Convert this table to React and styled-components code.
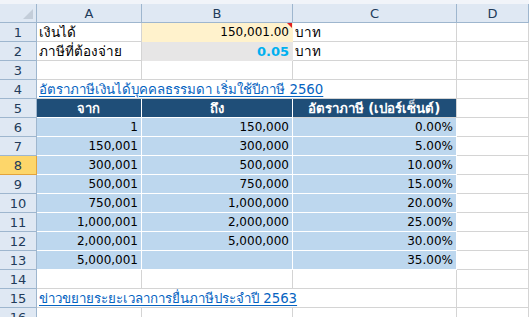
import styled, { createGlobalStyle } from "styled-components";

const GlobalStyle = createGlobalStyle`
  html, body {
    margin: 0;
    padding: 0;
    background: #ffffff;
    overflow: hidden;
  }
  body {
    font-family: "DejaVu Sans", Tahoma, "Noto Sans", sans-serif;
    font-size: 12px;
  }
`;

const Sheet = styled.div`
  display: grid;
  grid-template-columns: 37px 105px 151px 164px 1fr;
  grid-template-rows: 4px 19px;
  grid-auto-rows: 19px;
  width: 529px;
  height: 317px;
  overflow: hidden;
  color: #000;
`;

const TopStrip = styled.div`
  grid-column: 1 / -1;
  background: #f1f4f9;
`;

const Corner = styled.div`
  position: relative;
  box-sizing: border-box;
  background: #dfe8f3;
  border-right: 1px solid #9eb6ce;
  border-bottom: 1px solid #9eb6ce;
  &::after {
    content: "";
    position: absolute;
    right: 3px;
    bottom: 3px;
    width: 0;
    height: 0;
    border-left: 10px solid transparent;
    border-bottom: 10px solid #c3cdd9;
  }
`;

const ColHead = styled.div`
  box-sizing: border-box;
  display: flex;
  align-items: center;
  justify-content: center;
  background: #dfe8f3;
  border-right: 1px solid #9eb6ce;
  border-bottom: 1px solid #9eb6ce;
  color: #223b5a;
  font-size: 13px;
`;

const RowHead = styled.div`
  box-sizing: border-box;
  display: flex;
  align-items: center;
  justify-content: center;
  background: ${(p) => (p.$active ? "#fdd66a" : "#dfe8f3")};
  border-right: 1px solid ${(p) => (p.$active ? "#e3a33b" : "#9eb6ce")};
  border-bottom: 1px solid ${(p) => (p.$active ? "#e3a33b" : "#9eb6ce")};
  color: #223b5a;
  font-size: 13px;
`;

const Cell = styled.div`
  position: relative;
  box-sizing: border-box;
  display: flex;
  align-items: center;
  justify-content: ${(p) =>
    p.$align === "right" ? "flex-end" : p.$align === "center" ? "center" : "flex-start"};
  padding: 0 3px 0 2px;
  white-space: nowrap;
  overflow: visible;
  grid-column: ${(p) => p.$span || "auto"};
  background: ${(p) => p.$bg || "#ffffff"};
  border-right: 1px solid ${(p) => p.$line || "#d4d4d4"};
  border-bottom: 1px solid ${(p) => p.$line || "#d4d4d4"};
  color: ${(p) => p.$color || "#000"};
  font-weight: ${(p) => (p.$bold ? 700 : 400)};
  font-size: ${(p) => (p.$size ? `${p.$size}px` : "12px")};
`;

const Link = styled.span`
  color: #0563c1;
  font-size: 13.3px;
  text-decoration: underline;
  text-underline-offset: 2px;
`;

const CommentMark = styled.span`
  position: absolute;
  top: 0;
  right: 0;
  width: 0;
  height: 0;
  border-top: 5px solid #e02020;
  border-left: 5px solid transparent;
`;

const rates = [
  ["1", "150,000", "0.00%"],
  ["150,001", "300,000", "5.00%"],
  ["300,001", "500,000", "10.00%"],
  ["500,001", "750,000", "15.00%"],
  ["750,001", "1,000,000", "20.00%"],
  ["1,000,001", "2,000,000", "25.00%"],
  ["2,000,001", "5,000,000", "30.00%"],
  ["5,000,001", "", "35.00%"],
];

const TABLE_BG = "#bdd7ee";
const TABLE_HEAD = "#1f4e78";
const THAI = 13.5;

export default function App() {
  return (
    <>
      <GlobalStyle />
      <Sheet>
        <TopStrip />
        <Corner />
        <ColHead>A</ColHead>
        <ColHead>B</ColHead>
        <ColHead>C</ColHead>
        <ColHead>D</ColHead>

        <RowHead>1</RowHead>
        <Cell $size={THAI}>เงินได้</Cell>
        <Cell $align="right" $bg="#fff2cc" $line="#fff2cc">
          150,001.00
          <CommentMark />
        </Cell>
        <Cell $size={THAI}>บาท</Cell>
        <Cell />

        <RowHead>2</RowHead>
        <Cell $size={THAI}>ภาษีที่ต้องจ่าย</Cell>
        <Cell $align="right" $bg="#e7e6e6" $line="#e7e6e6" $color="#00b0f0" $bold $size={13}>
          0.05
        </Cell>
        <Cell $size={THAI}>บาท</Cell>
        <Cell />

        <RowHead>3</RowHead>
        <Cell />
        <Cell />
        <Cell />
        <Cell />

        <RowHead>4</RowHead>
        <Cell $span="span 3">
          <Link>อัตราภาษีเงินได้บุคคลธรรมดา เริ่มใช้ปีภาษี 2560</Link>
        </Cell>
        <Cell />

        <RowHead>5</RowHead>
        <Cell $align="center" $bg={TABLE_HEAD} $line="#ffffff" $color="#ffffff" $bold $size={13}>
          จาก
        </Cell>
        <Cell $align="center" $bg={TABLE_HEAD} $line="#ffffff" $color="#ffffff" $bold $size={13}>
          ถึง
        </Cell>
        <Cell $align="center" $bg={TABLE_HEAD} $line="#d4d4d4" $color="#ffffff" $bold $size={13.3}>
          อัตราภาษี (เปอร์เซ็นต์)
        </Cell>
        <Cell />

        {rates.map((r, i) => (
          <>
            <RowHead key={`h${i}`} $active={i === 2}>
              {i + 6}
            </RowHead>
            <Cell key={`a${i}`} $align="right" $bg={TABLE_BG} $line="#ffffff">
              {r[0]}
            </Cell>
            <Cell key={`b${i}`} $align="right" $bg={TABLE_BG} $line="#ffffff">
              {r[1]}
            </Cell>
            <Cell key={`c${i}`} $align="right" $bg={TABLE_BG} $line="#ffffff">
              {r[2]}
            </Cell>
            <Cell key={`d${i}`} />
          </>
        ))}

        <RowHead>14</RowHead>
        <Cell />
        <Cell />
        <Cell />
        <Cell />

        <RowHead>15</RowHead>
        <Cell $span="span 3">
          <Link>ข่าวขยายระยะเวลาการยื่นภาษีประจำปี 2563</Link>
        </Cell>
        <Cell />

        <RowHead>16</RowHead>
        <Cell />
        <Cell />
        <Cell />
        <Cell />
      </Sheet>
    </>
  );
}
